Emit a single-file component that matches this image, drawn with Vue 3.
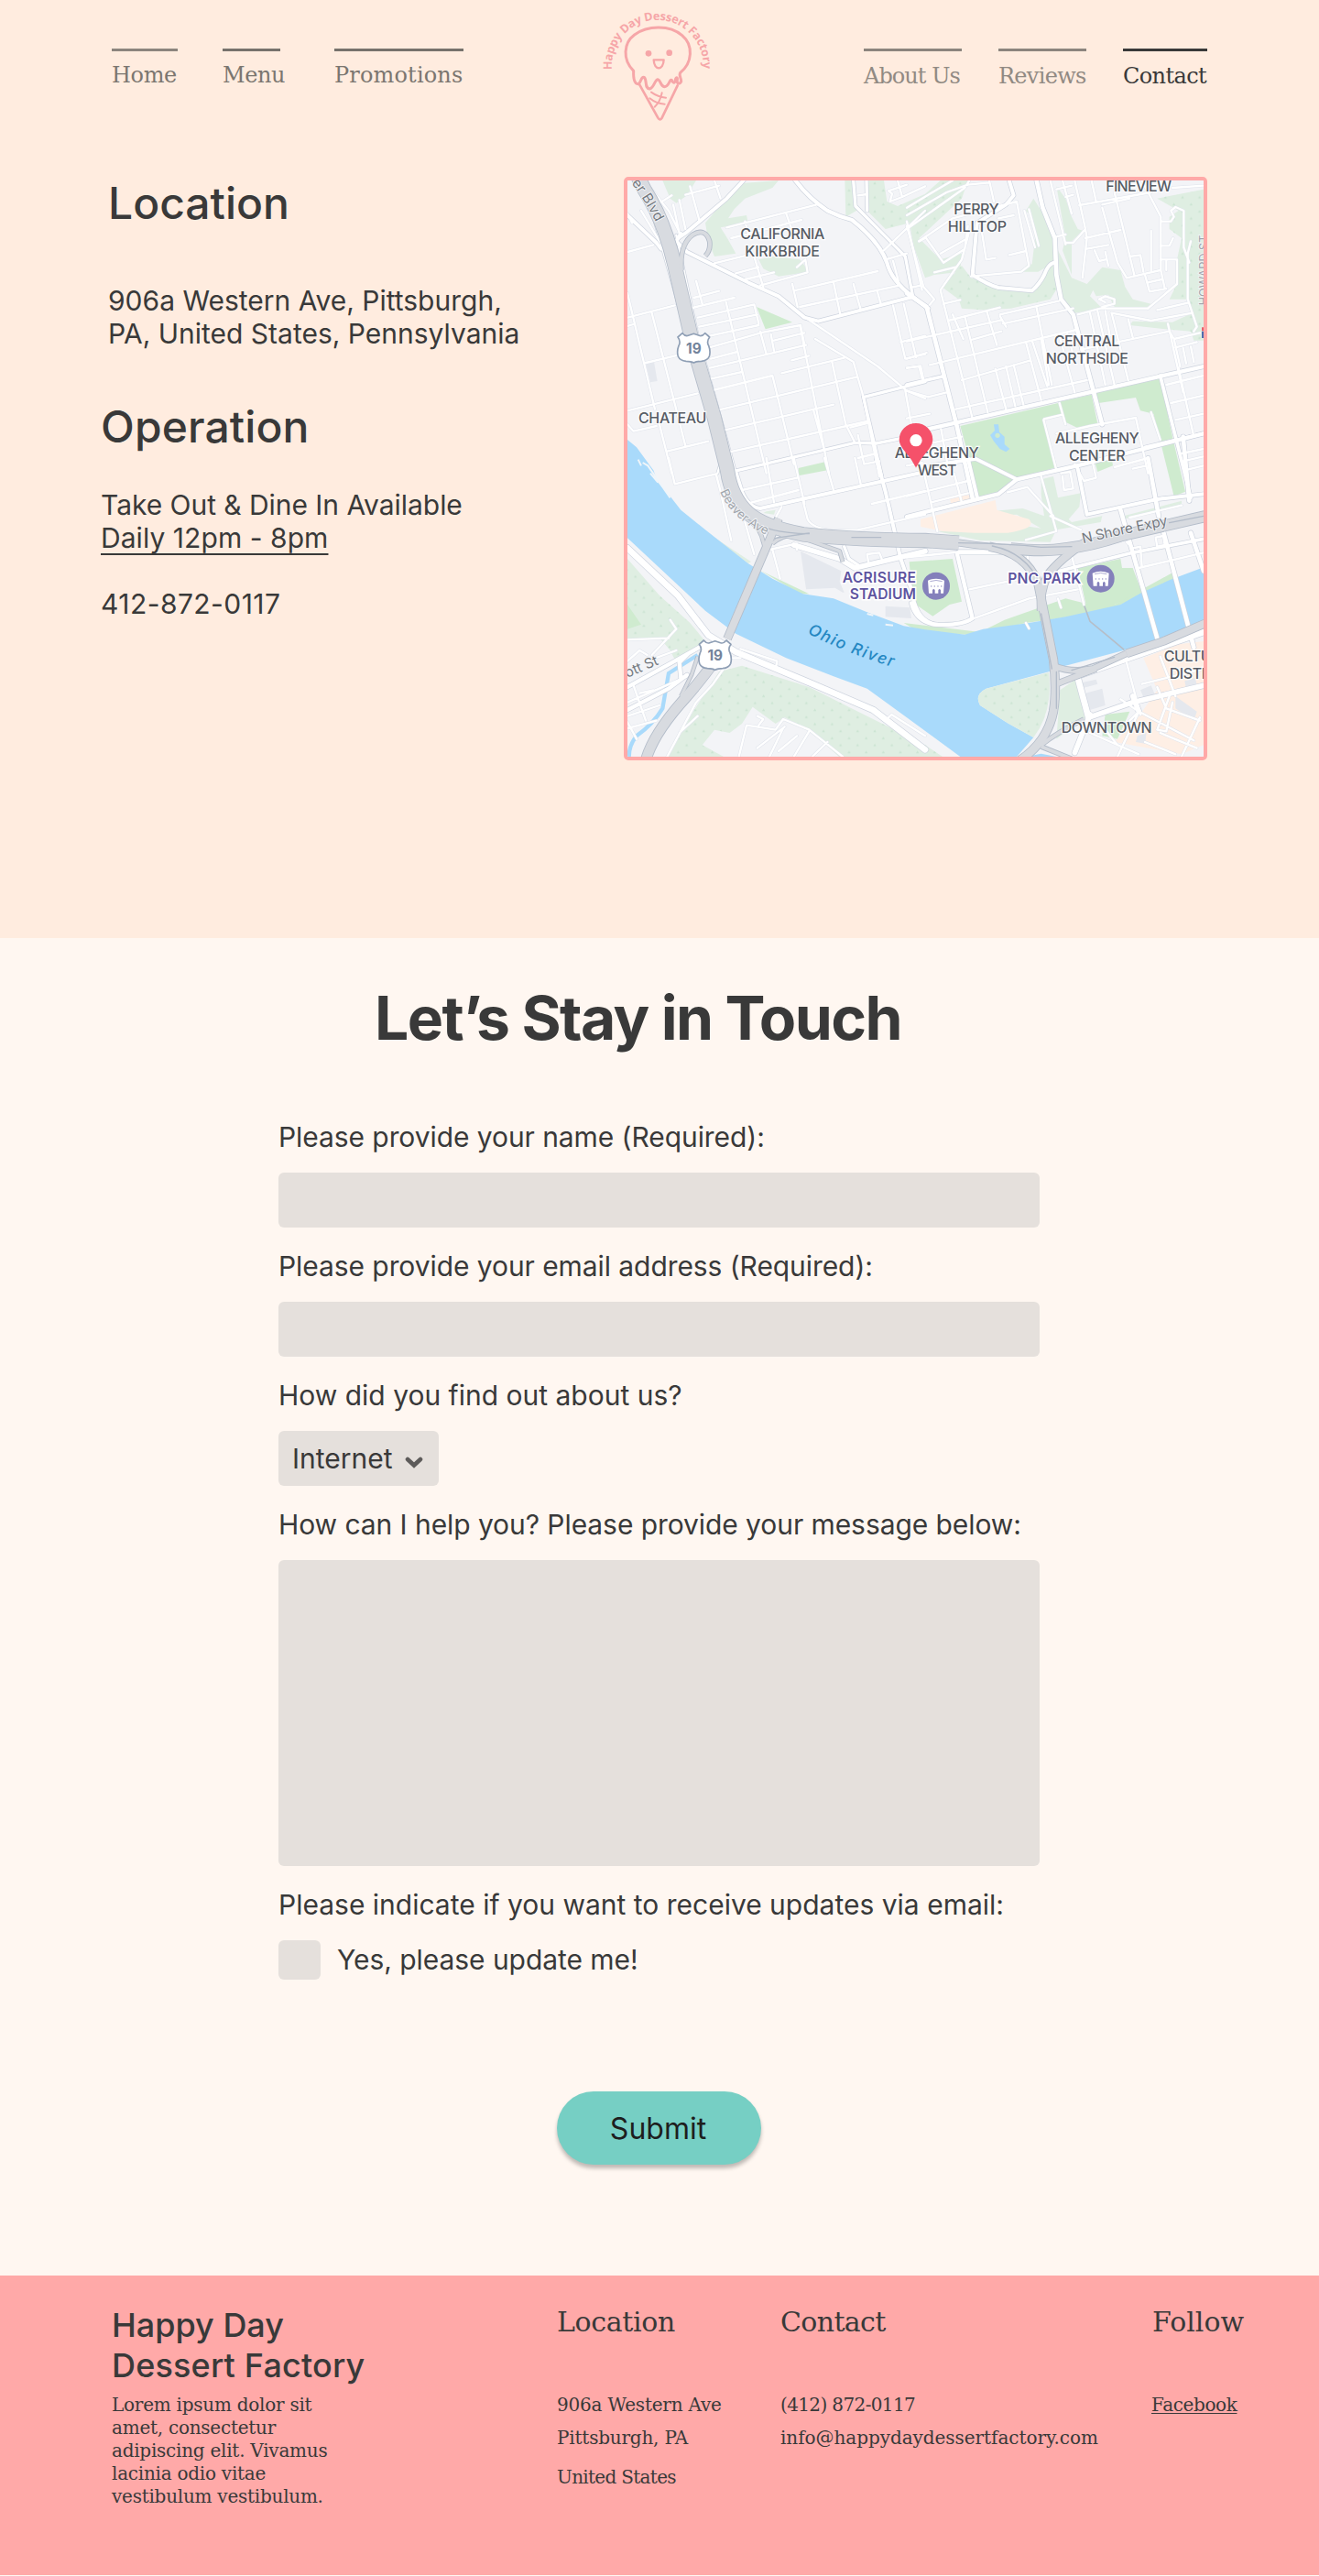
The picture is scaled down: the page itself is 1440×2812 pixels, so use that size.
<script setup>
const leftNav = [
  { text: 'Home', cls: 'home' },
  { text: 'Menu', cls: 'menu' },
  { text: 'Promotions', cls: 'promotions' },
]
const rightNav = [
  { text: 'About Us', cls: 'about' },
  { text: 'Reviews', cls: 'reviews' },
  { text: 'Contact', cls: 'contact' },
]

// Streets are grouped by map quadrant; dx/dy shift a quadrant's coordinates.
const quads = [
  {
    dx: 0, dy: 0,
    streets: [
      'M100 51L180 150L215 220M150 125L190 100M45 285L130 262M90 150L150 250M195 130L215 225M215 115L235 210M250 70L280 180M235 98L345 68M330 51L350 110',
      'M370 205L665 130M430 185L445 240M565 160L590 230M385 240L615 180M330 322L440 295M460 300L490 400M400 355L475 335M430 375L525 352M480 395L635 352L628 310L600 335',
      'M45 420L135 800M45 500L200 460M45 528L65 522M125 485L235 920M105 648L215 622M45 805L275 748M45 850L65 872L140 855M175 938L310 905M150 850L190 1010',
      'M270 380L290 455M262 435L345 413M258 468L395 435M275 500L460 457L475 520M280 530L470 490M290 565L475 525M300 602L490 548L612 525L625 590M315 665L630 590M318 635L405 612M320 700L420 678M325 738L520 690L590 980M345 802L795 695M365 868L720 785M380 940L830 840M368 450L500 1010M480 545L500 620M515 555L525 608M525 575L625 550M583 640L640 625M550 682L755 632',
      'M660 570L785 645L815 750L870 1020M610 525L705 1010M715 645L760 850L790 910M655 805L690 935M585 390L602 465M590 412L865 348M610 465L935 395M720 385L742 490M785 390L808 470M862 410L875 455M635 505L865 660L960 740L1020 765M955 740L975 850',
      'M915 460L955 635L1020 620M950 455L990 630M940 580L1020 560M960 665L1000 660L1010 700M775 860L835 845M800 885L820 980L870 970M800 960L860 945M890 310L960 290M915 315L935 390M885 280L1020 150M960 185L1010 410M1000 250L1020 240',
      'M930 51L945 105L905 120L912 95L900 85L960 65M945 105L1020 70M800 100L830 96M45 160L60 190',
    ],
    mains: [
      { d: 'M425 51L370 110L240 220L210 240', w: 12 },
      { d: 'M45 165L140 255L155 275M220 225L205 250L240 285L440 385L540 430L625 500L670 512L980 432', w: 12 },
      { d: 'M595 51Q640 110 700 150Q740 170 780 180Q870 250 895 320Q910 380 980 432L1030 470', w: 13 },
      { d: 'M785 51L792 135L955 300L980 432M828 51L830 150', w: 10 },
      { d: 'M130 170L210 450L355 960L340 1010M205 230L275 560L400 1010', w: 7 },
      { d: 'M395 1003L790 910L860 912L1020 880M820 760L1020 710M818 760L878 1020', w: 10 },
    ],
  },
  {
    dx: 960, dy: 0,
    streets: [
      'M0 140L100 80L150 51M0 165L130 90L200 65L270 58M0 210L190 75L205 51M270 51L285 120M40 250L150 175L360 120L400 330L375 350L210 365M60 235L120 320L190 275L200 200M110 290L190 245M205 215L180 310L110 410L215 830M90 352L160 335M245 215L260 310L290 305M335 295L390 282M350 165L300 175M385 150L420 270M400 145L432 265',
      'M0 200L55 400L90 440L75 458M20 400L45 395M120 455L175 442M135 510L305 467M150 490L185 570M305 490L500 445M315 520L545 470M215 572L310 545M75 655L555 540M0 578L310 508M190 495L265 810M262 480L295 590M425 468L475 720M305 495L325 530M0 635L65 615M160 800L590 705M180 705L405 640M290 668L325 800M325 660L355 790M350 655L382 785M390 580L440 770M410 575L460 725M440 570L465 720M500 560L550 745M525 550L550 640M0 665L45 658L55 705M0 740L70 760L130 745M0 830L75 815',
      'M470 51L520 260M510 51L540 160M490 80L540 68M520 105L545 98M550 51L585 210L545 255L520 255M585 210L590 240L575 370M605 51L620 120M565 132L800 90M640 140L690 320L720 370L830 345M680 90L745 360M585 240L700 213M590 275L660 262M490 235L520 228M615 280L630 315L650 310M650 285L660 330M730 300L765 295L775 350M780 360L795 415L850 405M790 385L835 375M770 51L832 170V345L845 405M800 215V345M640 130L730 110M832 185H865L875 170L865 150L880 138L907 150V270L925 320M830 265H860L872 240M830 310H885V390L790 470M850 315V345M930 250L920 290V440L950 530L940 545M820 475L920 452M870 75L970 68',
      'M560 490L635 470L790 470M640 465L680 455V440L650 430L630 440L650 450M670 485L800 510L935 485M570 605L860 545L875 570L960 550M600 485L650 720M625 480L680 720M650 478L665 560M672 490L725 705M725 505L740 565M855 520L905 745M880 598L950 580M875 570L895 660M905 600L915 650M930 595L940 645M850 720L972 690M865 780L972 755M880 835L972 815M890 665L940 890M900 945L972 930M905 970L972 955M910 1000L972 985',
      'M500 780L520 850M450 832L510 818M448 835L490 1000M490 880L600 855L750 828L790 1010M740 995L785 985M800 810L830 900M112 865L135 990M85 910L180 890M0 985L50 975',
    ],
    mains: [
      { d: 'M335 51L350 100L325 130L230 190L215 360Q270 395 300 402L410 412Q435 390 450 360Q465 320 485 320', w: 12 },
      { d: 'M425 51L445 140L485 240L490 360L505 440L545 490L640 850', w: 14 },
      { d: 'M0 420L65 465L165 860L215 1090', w: 14 },
      { d: 'M70 865L972 660', w: 13 },
      { d: 'M0 720L120 692M830 690L930 1090M780 925L972 880', w: 11 },
      { d: 'M80 985L225 962L360 1030', w: 12 },
    ],
  },
  {
    dx: 0, dy: 960,
    streets: [
      'M180 0L200 85L335 52M335 52L350 110L385 270M420 105L600 65M435 150L605 105M500 0L525 145M590 0L625 150M690 0L720 105M790 0L810 90M845 150L1020 108M430 210L460 315M520 300L545 395M510 300L600 280L600 300',
      'M620 140L635 200Q650 230 720 238L800 235L1020 185M835 345L830 315L870 310L880 335M550 160L530 195',
      'M185 530L205 560L125 645M45 595L180 590M45 665L85 630L110 645M110 665L205 630M45 800L240 715M65 745L105 860M45 845L150 810M45 865L75 920M45 885L140 860M85 770L130 760',
      'M410 978L435 875L530 890L555 855L640 890L750 978M470 845L490 855L475 875M510 978L555 885M470 950L560 880M540 960L600 910M590 978L640 895M650 978L700 930M415 625L535 665L530 690M390 655L415 655M360 690L325 740L270 800L175 978M275 845L215 900M890 860L910 840L1020 910',
    ],
    mains: [
      { d: 'M45 295L210 450L310 580L400 635L640 735L850 825L1020 955', w: 20 },
      { d: 'M45 750L200 665L280 620M45 825L180 755L240 710M245 640L215 670L220 720', w: 13 },
      { d: 'M400 45L420 110Q440 160 480 165L1020 45M860 0L890 110L940 330L975 430Q990 540 1060 545', w: 12 },
      { d: 'M590 285L740 330L790 360L1020 305', w: 17 },
      { d: 'M755 290L770 330L800 350', w: 10 },
    ],
  },
  {
    dx: 960, dy: 960,
    streets: [
      'M50 20L100 240M0 125L200 75M155 50L180 145M80 145L200 115M0 155M440 60L490 240L390 268M470 190L570 235M395 95L330 112M395 95L480 190',
      'M505 50L535 45L545 100L515 105L510 60M550 20L580 75L620 65L610 20M680 30L790 0M730 195L900 155M540 320L560 400L580 480M0 325L170 308M700 160L840 130',
      'M205 430L420 385M560 430L400 460L290 500L220 525M495 460L505 490M395 320L400 380M760 360L972 310M720 275L740 295L765 290L770 355M815 260L840 255L845 285L820 290ZM390 540L400 558',
      'M720 670L765 840M770 740L972 690M820 750L850 820L960 860M860 780L820 890L850 895L870 800M600 900L760 970M650 890L690 940M690 978L760 830L940 925M900 978L960 850M830 900L950 950M780 930L880 970M830 650L880 780M730 860L760 830L700 790',
    ],
    mains: [
      { d: 'M0 192L300 118L360 70L580 20L972 -80', w: 13 },
      { d: 'M200 0L232 135M560 35L590 185L820 135L972 118', w: 12 },
      { d: 'M165 315L215 525Q180 550 90 545Q30 535 15 475', w: 13 },
      { d: 'M700 170L820 590M840 240L940 620M930 245L972 370', w: 14 },
      { d: 'M500 370L740 310L972 265', w: 11 },
      { d: 'M555 715L972 570M560 720L595 850', w: 20 },
      { d: 'M595 850L740 800L972 745M600 840L550 965M740 780L760 830', w: 17 },
      { d: 'M170 308H500', w: 15 },
      { d: 'M790 0L825 190M905 -70L925 140', w: 14 },
    ],
  },
]

const highways = [
  { d: 'M60 0L100 80Q165 180 200 330L260 590L330 830L372 1000Q385 1090 440 1140Q490 1185 620 1210Q800 1228 1020 1230L1130 1238', w: 44 },
  { d: 'M222 345Q215 260 260 228Q300 205 314 250Q318 280 300 298', w: 12 },
  { d: 'M1120 1236Q1260 1258 1400 1260L1480 1262', w: 20 },
  { d: 'M1230 1250Q1350 1270 1390 1370Q1410 1470 1440 1620Q1452 1720 1440 1790Q1420 1890 1330 1950', w: 26 },
  { d: 'M1300 1256Q1410 1268 1480 1256Q1560 1248 1660 1215L1940 1150', w: 34 },
  { d: 'M1560 1225Q1460 1290 1420 1345Q1395 1400 1400 1460', w: 24 },
  { d: 'M450 1170Q480 1190 490 1235L500 1270M520 1240Q580 1190 640 1230L740 1265L750 1300', w: 10 },
  { d: 'M540 1158L372 1552', w: 24 },
  { d: 'M330 1625Q300 1670 240 1740Q130 1860 105 1950', w: 32 },
  { d: 'M275 1610L255 1670L220 1740', w: 9 },
  { d: 'M1440 1640Q1500 1665 1570 1650L1680 1600M1450 1700Q1500 1680 1580 1650', w: 18 },
  { d: 'M1680 1600L1800 1560L1940 1500', w: 24 },
  { d: 'M1400 1900Q1450 1860 1540 1815M1400 1905L1500 1945', w: 12 },
]

const labels = [
  { t: 'CALIFORNIA', x: 415, y: 243, w: 276 },
  { t: 'KIRKBRIDE', x: 430, y: 300, w: 245 },
  { t: 'CHATEAU', x: 81, y: 845, w: 223 },
  { t: 'PERRY', x: 1114, y: 162, w: 148 },
  { t: 'HILLTOP', x: 1094, y: 220, w: 193 },
  { t: 'FINEVIEW', x: 1612, y: 88, w: 215 },
  { t: 'CENTRAL', x: 1442, y: 595, w: 215 },
  { t: 'NORTHSIDE', x: 1415, y: 652, w: 271 },
  { t: 'ALLEGHENY', x: 1446, y: 911, w: 275 },
  { t: 'CENTER', x: 1491, y: 969, w: 185 },
  { t: 'ALLEGHENY', x: 920, y: 960, w: 276 },
  { t: 'WEST', x: 995, y: 1017, w: 128 },
  { t: 'DOWNTOWN', x: 1466, y: 1859, w: 297 },
  { t: 'CULTURAL', x: 1802, y: 1625, w: 245 },
  { t: 'DISTRICT', x: 1820, y: 1682, w: 212 },
]
const shields = [
  { x: 262, y: 600 },
  { x: 332, y: 1606 },
]
const stadiums = [
  { x: 1056, y: 1379 },
  { x: 1595, y: 1355 },
]
const lorem = [
  'Lorem ipsum dolor sit',
  'amet, consectetur',
  'adipiscing elit. Vivamus',
  'lacinia odio vitae',
  'vestibulum vestibulum.',
]
</script>

<template>
  <div class="page">
    <section class="hero">
      <header class="header">
        <nav class="nav nav-left">
          <a v-for="n in leftNav" :key="n.text" class="nav-item" :class="n.cls">{{ n.text }}</a>
        </nav>
        <svg class="logo" width="160" height="145" viewBox="0 0 480 435">
          <defs><path id="logo-arc" d="M84 229A150 150 0 1 1 382.8 229" /></defs>
          <text class="logo-text">
            <textPath href="#logo-arc" textLength="494" lengthAdjust="spacing">Happy Day Dessert Factory</textPath>
          </text>
          <g fill="none" stroke="#f6a6a8" stroke-width="9" stroke-linecap="round" stroke-linejoin="round">
            <path d="M155 232C118 196 122 140 158 114C202 82 274 82 314 116C352 148 348 206 308 238C302 248 312 256 311 267C306 277 296 276 298 262C300 252 294 252 292 262C290 276 282 270 280 262C272 258 272 284 256 284C242 282 246 264 234 260C224 262 222 288 208 291C190 290 200 262 190 253C178 250 182 268 171 275C158 276 154 258 155 232Z" />
            <path d="M175 278L235 386Q241 396 248 386L299 280" stroke-width="8" />
            <path d="M213 302Q235 318 261 320M208 322Q230 340 257 341M248 304Q242 334 224 350" stroke-width="6" />
            <path d="M221 196H254C253 232 222 232 221 196Z" stroke-width="7" />
          </g>
          <circle cx="204" cy="175" r="10" fill="#f6a6a8" />
          <circle cx="272" cy="173" r="10" fill="#f6a6a8" />
        </svg>
        <nav class="nav nav-right">
          <a v-for="n in rightNav" :key="n.text" class="nav-item" :class="n.cls">{{ n.text }}</a>
        </nav>
      </header>

      <div class="hero-body">
        <div class="info">
          <div class="place">
            <h2>Location</h2>
            <p>906a Western Ave, Pittsburgh,<br />PA, United States, Pennsylvania</p>
          </div>
          <h2 class="operation">Operation</h2>
          <p class="hours">
            <span class="tight">Take Out &amp; Dine In Available</span><br />
            <span class="daily">Daily 12pm - 8pm</span><br /><br />
            <span class="tel">412-872-0117</span>
          </p>
        </div>

        <div class="map">
          <svg width="629" height="629" viewBox="45 51 1887 1887">
            <defs>
              <pattern id="trees" width="56" height="46" patternUnits="userSpaceOnUse">
                <path d="M10 18l5-9 5 9zM38 41l5-9 5 9z" fill="#cbe4d2" />
              </pattern>
              <path id="river-name" d="M634 1534Q760 1598 925 1648" />
              <path id="shore-name" d="M1537 1240Q1690 1204 1824 1178" />
              <path id="beaver-name" d="M348 1070Q385 1160 500 1212" />
              <path id="blvd-name" d="M42 40Q90 95 135 182" />
            </defs>
            <rect x="45" y="51" width="1887" height="1887" fill="#f3f4f7" />

            <g fill="#dfeee2">
              <path d="M160 51H270L240 100L205 125L185 110Z" />
              <path d="M420 60L540 51L520 75L430 110L395 145L375 175L435 165L440 190L350 205L372 240L400 290L330 300L310 250L300 190L360 120Z" />
              <path d="M475 310L520 300L610 310L640 350L540 365L490 340Z" />
              <path d="M757 51H785L795 150L760 170ZM835 51H885L895 120L930 135L1020 95L1070 51H1160L1140 110L1000 240L1070 310L1140 290L1135 350L1050 360L1020 370L980 260L970 190L890 210L830 150Z" />
              <path d="M1075 400L1140 330L1170 370L1260 402L1370 412L1410 360L1435 325L1390 350L1340 350L1350 330L1370 325L1380 240L1370 170L1350 150L1375 110L1400 150L1445 260L1455 400L1430 440L1300 470L1210 475L1140 470L1130 440Z" />
              <path d="M1450 70L1480 110L1500 170L1520 210L1535 215L1500 250L1500 360L1470 280L1480 240Z" />
              <path d="M1455 280L1500 370L1550 390L1600 335L1660 345L1675 400L1700 440L1760 455L1740 470L1640 465L1620 425L1580 430L1570 410L1560 430L1600 470L1510 485L1465 440Z" />
              <path d="M1780 110L1932 80V575L1900 575L1890 545L1830 540L1690 525L1700 512L1830 515L1895 485L1885 440L1820 440L1845 390V310L1860 240L1820 210V170L1850 150Z" />
              <path d="M1400 1030L1440 1020L1455 1090L1530 1075L1525 1120L1490 1160L1500 1170L1600 1150L1595 1170L1450 1195L1430 1235L1200 1230L1060 1200L1200 1190L1330 1180L1400 1190L1320 1145L1220 1150L1230 1135L1340 1125L1410 1150L1400 1080Z" />
              <path d="M1670 1150L1860 1100V1115L1670 1160Z" />
              <path d="M45 1290L150 1410L250 1500L300 1560L200 1620L185 1590L150 1548L45 1560Z" />
              <path d="M345 1660L420 1640L640 1710L800 1790L1020 1900L1080 1940H740L640 1850L560 1810L530 1830L455 1775L420 1830L380 1860L330 1850L290 1900L360 1938H180L260 1790Z" />
              <path d="M1462 1720L1520 1680L1560 1800L1450 1880Z" />
              <path d="M330 1220L450 1300L440 1305ZM500 1135L530 1130L525 1145L490 1140Z" />
            </g>
            <g fill="url(#trees)">
              <path d="M45 1290L150 1410L250 1500L300 1560L200 1620L185 1590L150 1548L45 1560Z" />
              <path d="M345 1660L420 1640L640 1710L800 1790L1020 1900L1080 1940H740L640 1850L560 1810L530 1830L455 1775L420 1830L380 1860L330 1850L290 1900L360 1938H180L260 1790Z" />
              <path d="M1780 110L1932 80V575L1900 575L1890 545L1830 540L1895 485L1885 440L1820 440L1845 390V310L1860 240L1820 210V170L1850 150Z" />
              <path d="M757 51H785L795 150L760 170ZM835 51H885L895 120L930 135L1020 95L1070 51H1160L1140 110L1000 240L970 190L890 210L830 150Z" />
              <path d="M1075 400L1140 330L1170 370L1260 402L1370 412L1455 400L1430 440L1300 470L1210 475L1140 470L1130 440Z" />
            </g>

            <g fill="#cfebcf">
              <path d="M468 465L585 515L497 538ZM605 993L695 972L700 1000L605 1018Z" />
              <path d="M1135 855L1455 780L1475 820L1408 835L1450 990L1325 1028L1190 965L1165 965Z" />
              <path d="M1463 775L1565 752L1585 848L1520 862L1475 840Z" />
              <path d="M1580 745L1790 697L1830 890L1872 1070L1835 1085L1768 815L1725 805L1710 762L1588 780Z" />
              <path d="M1575 970L1630 955L1635 985L1585 1005Z" />
              <path d="M1165 970L1195 970L1315 1035L1265 1072L1192 1090Z" />
              <path d="M968 1300L1110 1290L1140 1430L1100 1440L1045 1478L990 1440L975 1380Z" />
              <path d="M1520 1320L1660 1290L1665 1320L1700 1320L1730 1400L1640 1440L1550 1455Z" />
              <path d="M950 1500L1200 1530L1280 1490L1480 1420L1560 1440L1640 1440L1840 1330V1360L1640 1450L1480 1482L1350 1500L1180 1540L1000 1530Z" />
              <path d="M45 1440L90 1505L45 1520ZM1610 1800L1690 1790L1650 1880L1600 1870Z" />
              <path d="M480 1328L640 1405L610 1405Z" />
            </g>

            <g fill="#feefe5">
              <path d="M1005 1160L1250 1098L1255 1130L1360 1160Q1390 1190 1290 1205L1180 1205L1080 1200L1005 1185ZM1100 1090L1170 1080L1172 1100L1105 1110Z" />
              <path d="M1735 1615L1850 1570L1932 1560V1900L1860 1930L1640 1890L1710 1820L1780 1720Z" />
            </g>
            <g fill="#e5e8ee">
              <path d="M612 1265L745 1330L740 1365L755 1400L750 1400L725 1385L630 1390Z" />
              <path d="M890 1445L970 1450L975 1485L890 1480ZM105 650L132 645L143 708L120 712Z" />
              <path d="M1545 1730L1600 1715L1610 1770L1560 1785ZM1535 1695L1580 1685L1585 1700L1540 1712Z" />
              <path d="M1725 1720L1760 1705L1775 1740L1740 1755ZM1715 1870L1745 1860L1740 1895L1710 1890ZM1870 1690L1905 1680L1910 1705L1875 1715ZM1840 1740L1910 1790L1900 1820L1840 1780Z" />
            </g>

            <path fill="#a9dafb" d="M45 900L75 925L130 1000L145 1040L185 1085L220 1130L300 1195L440 1305L520 1355L620 1405L720 1420L830 1465L950 1510L1020 1522L1150 1538L1210 1520L1360 1500L1480 1480L1660 1440L1730 1400L1820 1360L1932 1318V1495L1780 1555L1670 1590L1480 1640L1425 1660L1220 1715Q1180 1735 1200 1770L1290 1828L1375 1875L1320 1938H1135L960 1810L830 1715L720 1675L565 1615L400 1535L300 1460L45 1222Z" />
            <path fill="#a9dafb" d="M1245 850L1260 850L1263 875L1280 890L1280 915L1297 930L1285 940L1265 930L1245 905L1233 885L1248 870Z" />
            <path fill="#a9dafb" d="M1350 1938L1400 1928L1450 1938Z" />
            <path fill="#dfeee2" d="M1425 1662L1220 1715Q1180 1735 1200 1770L1290 1828L1375 1875Q1440 1790 1425 1662Z" />
            <path fill="url(#trees)" d="M1425 1662L1220 1715Q1180 1735 1200 1770L1290 1828L1375 1875Q1440 1790 1425 1662Z" />
            <circle cx="1257" cy="886" r="8" fill="#cfebcf" />
            <path d="M275 1605L180 1665L160 1780Q130 1830 75 1870Q50 1900 50 1938" fill="none" stroke="#a9dafb" stroke-width="13" />
            <path d="M80 965L90 985M95 975L112 985L185 1090M120 1010L145 1040M830 1470L850 1475M890 1505L915 1508" fill="none" stroke="#f0f5f9" stroke-width="6" />
            <path d="M1540 1440L1560 1495L1615 1540L1672 1588" fill="none" stroke="#b6bec8" stroke-width="5" />

            <g fill="none" stroke-linejoin="round" stroke-linecap="round">
              <g v-for="(q, i) in quads" :key="'c' + i" :transform="`translate(${q.dx} ${q.dy})`">
                <path v-for="(s, j) in q.streets" :key="'a' + j" :d="s" stroke="#e0e4ec" stroke-width="10" />
                <path v-for="(m, j) in q.mains" :key="'b' + j" :d="m.d" stroke="#cdd3de" :stroke-width="m.w + 4" />
              </g>
              <g v-for="(q, i) in quads" :key="'f' + i" stroke="#fff" :transform="`translate(${q.dx} ${q.dy})`">
                <path v-for="(s, j) in q.streets" :key="'a' + j" :d="s" stroke-width="7" />
                <path v-for="(m, j) in q.mains" :key="'b' + j" :d="m.d" :stroke-width="m.w" />
              </g>
              <path v-for="(h, i) in highways" :key="'hc' + i" :d="h.d" stroke="#b3bcc9" :stroke-width="h.w + 5" stroke-linecap="butt" />
              <path v-for="(h, i) in highways" :key="'hf' + i" :d="h.d" stroke="#d8dbe0" :stroke-width="h.w" stroke-linecap="butt" />
              <path
                d="M440 1160Q500 1205 640 1208M780 1220H875M1130 1238Q1300 1240 1400 1252L1500 1250M1240 1248Q1350 1270 1395 1370M1400 1470L1435 1650M1450 1660V1780M1500 1655L1640 1612M1820 1172L1932 1150M530 1222L640 1206"
                stroke="#b3bcc9" stroke-width="4"
              />
            </g>

            <g class="street-name">
              <text><textPath href="#blvd-name">ver Blvd</textPath></text>
              <text class="pale"><textPath href="#beaver-name">Beaver Ave</textPath></text>
              <text><textPath href="#shore-name" textLength="285">N Shore Expy</textPath></text>
              <text transform="translate(20 1690) rotate(-23)">cott St</text>
              <text class="vertical" transform="translate(1948 460) rotate(-90)">HOWARD ST</text>
            </g>
            <path d="M1929 532v12" stroke="#e8606c" stroke-width="6" />
            <path d="M1929 545v22" stroke="#4c6cae" stroke-width="6" />

            <text class="river"><textPath href="#river-name" textLength="300">Ohio River</textPath></text>
            <text v-for="(l, i) in labels" :key="'l' + i" class="area" :x="l.x" :y="l.y" :textLength="l.w">{{ l.t }}</text>
            <g class="venue">
              <text x="749" y="1367" textLength="241">ACRISURE</text>
              <text x="773" y="1421" textLength="217">STADIUM</text>
              <text x="1291" y="1370" textLength="240">PNC PARK</text>
            </g>

            <g v-for="(s, i) in stadiums" :key="'s' + i" :transform="`translate(${s.x} ${s.y})`">
              <circle r="45" fill="#8480bb" />
              <path d="M-27 -18Q0 -30 27 -18L24 24H15V14Q11 6 7 14V24H-4V14Q-8 6 -12 14V24H-24Z" fill="#fff" />
              <path d="M-20 -15Q0 -22 20 -15" fill="none" stroke="#8480bb" stroke-width="2" />
              <path d="M-18 1H20" stroke="#8480bb" stroke-width="3" stroke-dasharray="4 7" />
            </g>

            <g v-for="(s, i) in shields" :key="'h' + i" :transform="`translate(${s.x} ${s.y})`">
              <path
                d="M-37 -49Q-27 -37 -18 -41L0 -47L18 -41Q27 -37 37 -49L52 -36Q41 -22 49 -8Q56 10 51 27Q45 41 25 43Q8 43 0 48Q-8 43 -25 43Q-45 41 -51 27Q-56 10 -49 -8Q-41 -22 -52 -36Z"
                fill="#fff" stroke="#8f9fb5" stroke-width="5" stroke-linejoin="round"
              />
              <text class="route" y="17" text-anchor="middle">19</text>
            </g>

            <path d="M990 992Q978 966 956 941Q935 918 935 900A55 54 0 0 1 1045 900Q1045 918 1024 941Q1002 966 990 992Z" fill="#f5516a" />
            <circle cx="990" cy="902" r="20" fill="#fff" />
          </svg>
        </div>
      </div>
    </section>

    <main class="touch">
      <h1>Let’s Stay in Touch</h1>
      <form class="form" @submit.prevent>
        <label>Please provide your name (Required):</label>
        <div class="field"></div>
        <label>Please provide your email address (Required):</label>
        <div class="field"></div>
        <label class="found">How did you find out about us?</label>
        <div class="field select">
          <span>Internet</span>
          <svg width="20" height="13" viewBox="0 0 20 13">
            <path d="M3 3L10 9.5L17 3" fill="none" stroke="#5d5b5a" stroke-width="4.6" stroke-linecap="round" />
          </svg>
        </div>
        <label>How can I help you? Please provide your message below:</label>
        <div class="field message"></div>
        <label class="indicate">Please indicate if you want to receive updates via email:</label>
        <div class="updates">
          <span class="box"></span>
          <span class="yes">Yes, please update me!</span>
        </div>
        <button type="submit">Submit</button>
      </form>
    </main>

    <footer class="footer">
      <div class="brand">
        <h3>Happy Day<br /><span class="factory">Dessert Factory</span></h3>
        <p><span v-for="l in lorem" :key="l">{{ l }}</span></p>
      </div>
      <div class="col col-location">
        <h4>Location</h4>
        <p>906a Western Ave</p>
        <p>Pittsburgh, PA</p>
        <p class="country">United States</p>
      </div>
      <div class="col col-contact">
        <h4>Contact</h4>
        <p class="phone">(412) 872-0117</p>
        <p class="mail">info@happydaydessertfactory.com</p>
      </div>
      <div class="col col-follow">
        <h4>Follow</h4>
        <p><a>Facebook</a></p>
      </div>
    </footer>
  </div>
</template>

<style>
body {
  background: #fff7f1;
}
</style>

<style scoped>
.page {
  width: 1440px;
  height: 2812px;
  overflow: hidden;
  color: #393939;
  background: #fff7f1;
  font-family: Inter, "Liberation Sans", sans-serif;
}
h1, h2, h3, h4, p {
  margin: 0;
}
.hero {
  height: 1024px;
  background: #ffecdf;
}
.header {
  display: flex;
  height: 193px;
}
.nav {
  display: flex;
  align-items: flex-start;
  box-sizing: border-box;
  padding-top: 53px;
}
.nav-left {
  width: 640px;
  padding-left: 122px;
}
.nav-right {
  width: 640px;
  padding-left: 143px;
}
.nav-item {
  box-sizing: border-box;
  border-top: 3px solid #77726c;
  padding-top: 12px;
  font: 24px/28px "DejaVu Serif", serif;
  color: #7b7670;
  white-space: nowrap;
}
.nav-right .nav-item {
  padding-top: 13px;
  border-color: #8c857e;
  color: #918a83;
}
.home { width: 72px; letter-spacing: -0.37px; border-color: #8c857e; }
.menu { width: 63px; margin-left: 49px; letter-spacing: -0.4px; }
.promotions { width: 141px; margin-left: 59px; letter-spacing: 0.16px; }
.about { width: 107px; letter-spacing: -0.95px; }
.reviews { width: 96px; margin-left: 40px; letter-spacing: -0.71px; }
.nav-right .contact {
  width: 92px;
  margin-left: 40px;
  border-color: #393939;
  color: #393939;
  letter-spacing: -0.61px;
}
.logo {
  flex: none;
}
.logo-text {
  font: 700 38px "Open Sans", sans-serif;
  fill: #f6a6a8;
}
.hero-body {
  display: flex;
}
.info {
  width: 571px;
  padding-left: 110px;
}
.place {
  padding-left: 8px;
}
h2 {
  font-size: 48px;
  line-height: 58px;
  font-weight: 500;
}
.info p {
  font-size: 30px;
  line-height: 36px;
}
.place p {
  margin-top: 59px;
}
.operation {
  margin-top: 55px;
  letter-spacing: 0.1px;
}
.info .hours {
  margin-top: 38px;
}
.tight {
  letter-spacing: -0.04px;
}
.tel {
  letter-spacing: 0.45px;
}
.daily {
  letter-spacing: 0.06px;
  text-decoration: underline;
  text-decoration-thickness: 2px;
  text-underline-offset: 6px;
  text-decoration-skip-ink: none;
}
.map {
  width: 629px;
  height: 629px;
  border: 4px solid #ffa9a8;
  border-radius: 5px;
  overflow: hidden;
}
.map svg {
  display: block;
}
.area {
  font: 500 48px Inter, sans-serif;
  fill: #575c65;
  stroke: #fff;
  stroke-width: 7px;
  stroke-opacity: 0.8;
  paint-order: stroke;
}
.venue text {
  font: 600 47px Inter, sans-serif;
  fill: #5e54a0;
  stroke: #fff;
  stroke-width: 9px;
  paint-order: stroke;
}
.route {
  font: 700 46px Inter, sans-serif;
  fill: #72839b;
}
.river {
  font: italic 500 52px Inter, sans-serif;
  fill: #2487c2;
}
.street-name text {
  font: 400 46px Inter, sans-serif;
  fill: #74797f;
  stroke: #f3f4f7;
  stroke-width: 5px;
  paint-order: stroke;
}
.street-name .pale {
  font-size: 40px;
  fill: #a0a5ab;
}
.street-name .vertical {
  font-size: 38px;
  fill: #a0a5ab;
}
.touch {
  box-sizing: border-box;
  height: 1460px;
  padding: 47px 304px 0;
}
h1 {
  padding-left: 105px;
  font-size: 66px;
  line-height: 80px;
  font-weight: 650;
  letter-spacing: -1.6px;
  white-space: nowrap;
}
.form {
  display: flex;
  flex-direction: column;
  align-items: flex-start;
  margin-top: 72px;
  font-size: 30px;
  line-height: 36px;
}
.form label {
  margin-bottom: 21px;
  letter-spacing: -0.07px;
}
.form .found,
.form .indicate {
  letter-spacing: 0;
}
.field {
  width: 831px;
  height: 60px;
  margin-bottom: 24px;
  border-radius: 6px;
  background: #e5e0dc;
}
.select {
  display: flex;
  align-items: center;
  box-sizing: border-box;
  width: 175px;
  padding-left: 15px;
}
.select svg {
  margin: 9px 0 0 13px;
}
.message {
  height: 334px;
}
.updates {
  display: flex;
  align-items: flex-start;
  height: 43px;
  gap: 18px;
}
.box {
  width: 46px;
  height: 43px;
  border-radius: 6px;
  background: #e5e0dc;
}
.yes {
  margin-top: 3px;
  letter-spacing: -0.05px;
}
button {
  width: 223px;
  height: 80px;
  margin: 122px 0 0 304px;
  padding: 1px 2px 0 0;
  border: 0;
  border-radius: 40px;
  background: #76cfc4;
  box-shadow: 0 4px 4px rgba(0, 0, 0, 0.25);
  font: 400 32px/39px Inter, sans-serif;
  color: #1e1e1e;
}
.footer {
  display: flex;
  box-sizing: border-box;
  height: 327px;
  padding: 32px 0 0 122px;
  background: #ffa9a8;
}
.brand {
  width: 486px;
}
h3 {
  font-size: 36px;
  line-height: 44px;
  font-weight: 500;
}
.factory {
  letter-spacing: 0.17px;
}
.brand p,
.col p {
  font: 20px/25px "DejaVu Serif", serif;
  letter-spacing: -0.2px;
  white-space: nowrap;
}
.brand p {
  display: flex;
  flex-direction: column;
  margin-top: 9px;
  letter-spacing: -0.25px;
}
.col h4 {
  margin: 1px 0 60px;
  font: 30px/36px "DejaVu Serif", serif;
  letter-spacing: -0.34px;
}
.col p + p {
  margin-top: 11px;
}
.col-location {
  width: 244px;
}
.col-contact {
  width: 405px;
}
.col-contact h4 {
  letter-spacing: -0.65px;
}
.col .phone {
  letter-spacing: -0.63px;
}
.col .mail {
  letter-spacing: -0.05px;
}
.col p.country {
  margin-top: 18px;
  letter-spacing: -0.7px;
}
.col-follow h4 {
  padding-left: 1px;
  letter-spacing: 0;
}
.col-follow p {
  letter-spacing: -0.38px;
}
.col-follow a {
  text-decoration: underline;
  text-decoration-thickness: 1px;
  text-underline-offset: 2px;
  text-decoration-skip-ink: none;
}
</style>
